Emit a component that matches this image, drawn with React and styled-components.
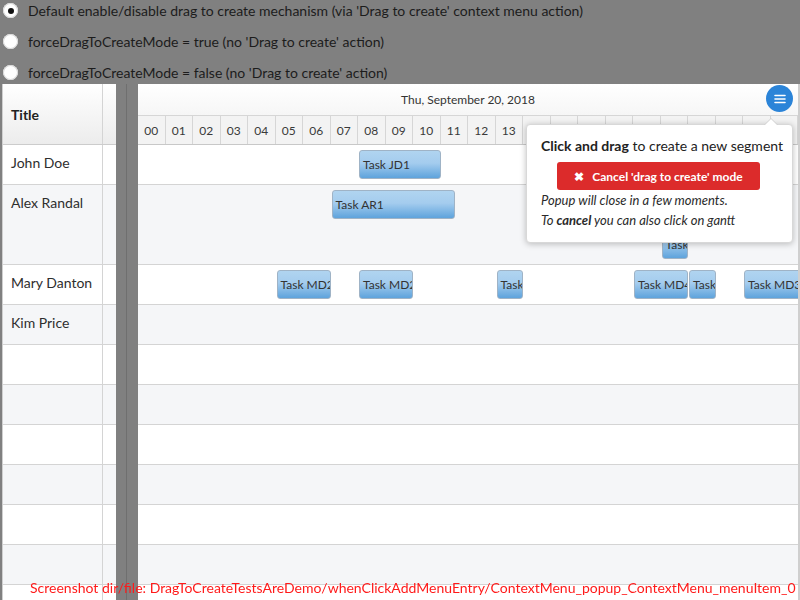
import styled, { createGlobalStyle } from "styled-components";

const HOURS = Array.from({ length: 24 }, (_, i) => String(i).padStart(2, "0"));

const rows = [
  { name: "John Doe", height: 40, tasks: [{ label: "Task JD1", start: 8, dur: 3 }] },
  {
    name: "Alex Randal",
    height: 80,
    tasks: [
      { label: "Task AR1", start: 7, dur: 4.5 },
      { label: "Task", start: 19, dur: 1, lane: 1 },
    ],
  },
  {
    name: "Mary Danton",
    height: 40,
    tasks: [
      { label: "Task MD2", start: 5, dur: 2 },
      { label: "Task MD2", start: 8, dur: 2 },
      { label: "Task", start: 13, dur: 1 },
      { label: "Task MD4", start: 18, dur: 2 },
      { label: "Task", start: 20, dur: 1 },
      { label: "Task MD3", start: 22, dur: 2.2 },
    ],
  },
  { name: "Kim Price", height: 40, tasks: [] },
  ...Array.from({ length: 7 }, () => ({ name: "", height: 40, tasks: [] })),
];

const GlobalStyle = createGlobalStyle`
  html, body {
    margin: 0;
    padding: 0;
    background: #808080;
    font-family: Lato, "Noto Sans", sans-serif;
    overflow: hidden;
  }
`;

const Options = styled.div`
  display: flex;
  flex-direction: column;
  gap: 10px;
  height: 84px;
  padding-left: 3px;
  box-sizing: border-box;
`;

const Option = styled.label`
  display: flex;
  align-items: center;
  gap: 10px;
  height: 21px;
  font-size: 14px;
  color: #1c1c1c;
`;

const Radio = styled.span`
  display: flex;
  align-items: center;
  justify-content: center;
  width: 15px;
  height: 15px;
  border-radius: 50%;
  background: #fff;
  box-shadow: inset 0 0 0 1px #d8d8d8;

  &::after {
    content: "";
    width: 6px;
    height: 6px;
    border-radius: 50%;
    background: ${(p) => (p.$checked ? "#111" : "transparent")};
  }
`;

const Gantt = styled.div`
  position: relative;
  display: flex;
  height: 516px;
  margin: 0 0 0 2px;
  border-right: 2px solid #cfcfcf;
  overflow: hidden;
`;

const LeftPane = styled.div`
  flex: none;
  width: 114px;
  background: #fff;
  border-left: 1px solid #cfcfcf;
  box-sizing: border-box;
`;

const TableRow = styled.div`
  display: grid;
  grid-template-columns: 100px 13px;
  height: ${(p) => p.$height}px;
  box-sizing: border-box;
  border-bottom: 1px solid #d4d4d4;
  background: ${(p) => (p.$alt ? "#f5f6f8" : "#fff")};
`;

const HeaderRow = styled(TableRow)`
  background: linear-gradient(#ffffff, #ececec);
  border-bottom: 1px solid #cccccc;
`;

const NameCell = styled.div`
  border-right: 1px solid #d4d4d4;
  padding: 9px 0 0 8px;
  font-size: 14px;
  line-height: 17px;
  color: #2e2e2e;
`;

const TitleCell = styled(NameCell)`
  display: flex;
  align-items: center;
  padding: 0 0 0 8px;
  font-weight: 700;
  color: #222;
`;

const Splitter = styled.div`
  flex: none;
  width: 22px;
  background: linear-gradient(to right, #808080 10px, #6f6f6f 10px, #6f6f6f 11px, #808080 11px);
`;

const Chart = styled.div`
  position: relative;
  flex: 1;
  background: #fff;
`;

const DateBand = styled.div`
  display: flex;
  align-items: center;
  justify-content: center;
  height: 31px;
  font-size: 12px;
  color: #333;
  background: linear-gradient(#ffffff, #f6f6f6);
`;

const HourRow = styled.div`
  display: grid;
  grid-template-columns: repeat(24, 1fr);
  height: 30px;
  box-sizing: border-box;
  border-top: 1px solid #d6d6d6;
  border-bottom: 1px solid #c8c8c8;
  background: #f3f3f3;
`;

const HourCell = styled.div`
  display: flex;
  align-items: center;
  justify-content: center;
  border-right: 1px solid #d6d6d6;
  font-size: 12px;
  color: #3a3a3a;
`;

const ChartRow = styled.div`
  position: relative;
  height: ${(p) => p.$height}px;
  box-sizing: border-box;
  border-bottom: 1px solid #d4d4d4;
  background: ${(p) => (p.$alt ? "#f5f6f8" : "#fff")};
`;

const Task = styled.div`
  position: absolute;
  top: ${(p) => 5 + (p.$lane || 0) * 40}px;
  left: calc(${(p) => (p.$start / 24) * 100}% + 1px);
  width: calc(${(p) => (p.$dur / 24) * 100}% - 0.5px);
  height: 29px;
  box-sizing: border-box;
  padding-left: 3px;
  border: 1px solid #9fb3c6;
  border-radius: 3px;
  background: linear-gradient(#b0d4f0, #a4ccee 45%, #5ea3dc);
  font-size: 12px;
  line-height: 27px;
  color: #333;
  white-space: nowrap;
  overflow: hidden;
`;

const MenuButton = styled.button`
  position: absolute;
  top: 1px;
  right: 5px;
  display: flex;
  align-items: center;
  justify-content: center;
  width: 27px;
  height: 27px;
  padding: 0;
  border: none;
  border-radius: 50%;
  background: #2b84d8;
`;

const Popup = styled.div`
  position: absolute;
  top: 40px;
  left: 388px;
  width: 267px;
  box-sizing: border-box;
  padding: 11px 12px 12px 14px;
  background: #fff;
  border: 1px solid #d8d8d8;
  border-radius: 4px;
  box-shadow: 0 1px 6px rgba(0, 0, 0, 0.25);
  color: #222;

  &::before,
  &::after {
    content: "";
    position: absolute;
    right: 14px;
    border: 7px solid transparent;
    border-top: none;
  }
  &::before {
    top: -7px;
    border-bottom-color: #d0d0d0;
  }
  &::after {
    top: -6px;
    border-bottom-color: #fff;
  }
`;

const PopupTitle = styled.div`
  font-size: 14px;
  line-height: 20px;
  white-space: nowrap;
`;

const CancelButton = styled.button`
  display: flex;
  align-items: center;
  justify-content: center;
  gap: 8px;
  width: 203px;
  height: 28px;
  margin: 6px 0 0 16px;
  border: none;
  border-radius: 3px;
  background: #dc2b2b;
  color: #fff;
  font-family: Lato, "Noto Sans", sans-serif;
  font-size: 12px;
  font-weight: 700;
`;

const Note = styled.div`
  font-size: 13px;
  line-height: 20px;
  font-style: italic;
  color: #2a2a2a;
  white-space: nowrap;
`;

const ScreenshotLabel = styled.div`
  position: fixed;
  left: 30px;
  bottom: 3px;
  font-size: 14px;
  line-height: 18px;
  color: #ff1a1a;
  white-space: nowrap;
`;

const options = [
  "Default enable/disable drag to create mechanism (via 'Drag to create' context menu action)",
  "forceDragToCreateMode = true (no 'Drag to create' action)",
  "forceDragToCreateMode = false (no 'Drag to create' action)",
];

export default function App() {
  return (
    <>
      <GlobalStyle />
      <Options>
        {options.map((text, i) => (
          <Option key={text}>
            <Radio $checked={i === 0} />
            {text}
          </Option>
        ))}
      </Options>
      <Gantt>
        <LeftPane>
          <HeaderRow $height={61}>
            <TitleCell>Title</TitleCell>
            <div />
          </HeaderRow>
          {rows.map((row, i) => (
            <TableRow key={i} $height={row.height} $alt={i % 2 === 1}>
              <NameCell>{row.name}</NameCell>
              <div />
            </TableRow>
          ))}
        </LeftPane>
        <Splitter />
        <Chart>
          <DateBand>Thu, September 20, 2018</DateBand>
          <HourRow>
            {HOURS.map((h) => (
              <HourCell key={h}>{h}</HourCell>
            ))}
          </HourRow>
          {rows.map((row, i) => (
            <ChartRow key={i} $height={row.height} $alt={i % 2 === 1}>
              {row.tasks.map((t, j) => (
                <Task key={j} $start={t.start} $dur={t.dur} $lane={t.lane}>
                  {t.label}
                </Task>
              ))}
            </ChartRow>
          ))}
          <MenuButton>
            <svg width="12" height="10" viewBox="0 0 12 10">
              <path d="M1 1.5h10M1 5h10M1 8.5h10" stroke="#fff" strokeWidth="1.6" strokeLinecap="round" />
            </svg>
          </MenuButton>
          <Popup>
            <PopupTitle>
              <b>Click and drag</b> to create a new segment
            </PopupTitle>
            <CancelButton>
              <span>✖</span> Cancel 'drag to create' mode
            </CancelButton>
            <Note>Popup will close in a few moments.</Note>
            <Note>
              To <b>cancel</b> you can also click on gantt
            </Note>
          </Popup>
        </Chart>
      </Gantt>
      <ScreenshotLabel>
        Screenshot dir/file: DragToCreateTestsAreDemo/whenClickAddMenuEntry/ContextMenu_popup_ContextMenu_menuItem_0
      </ScreenshotLabel>
    </>
  );
}
